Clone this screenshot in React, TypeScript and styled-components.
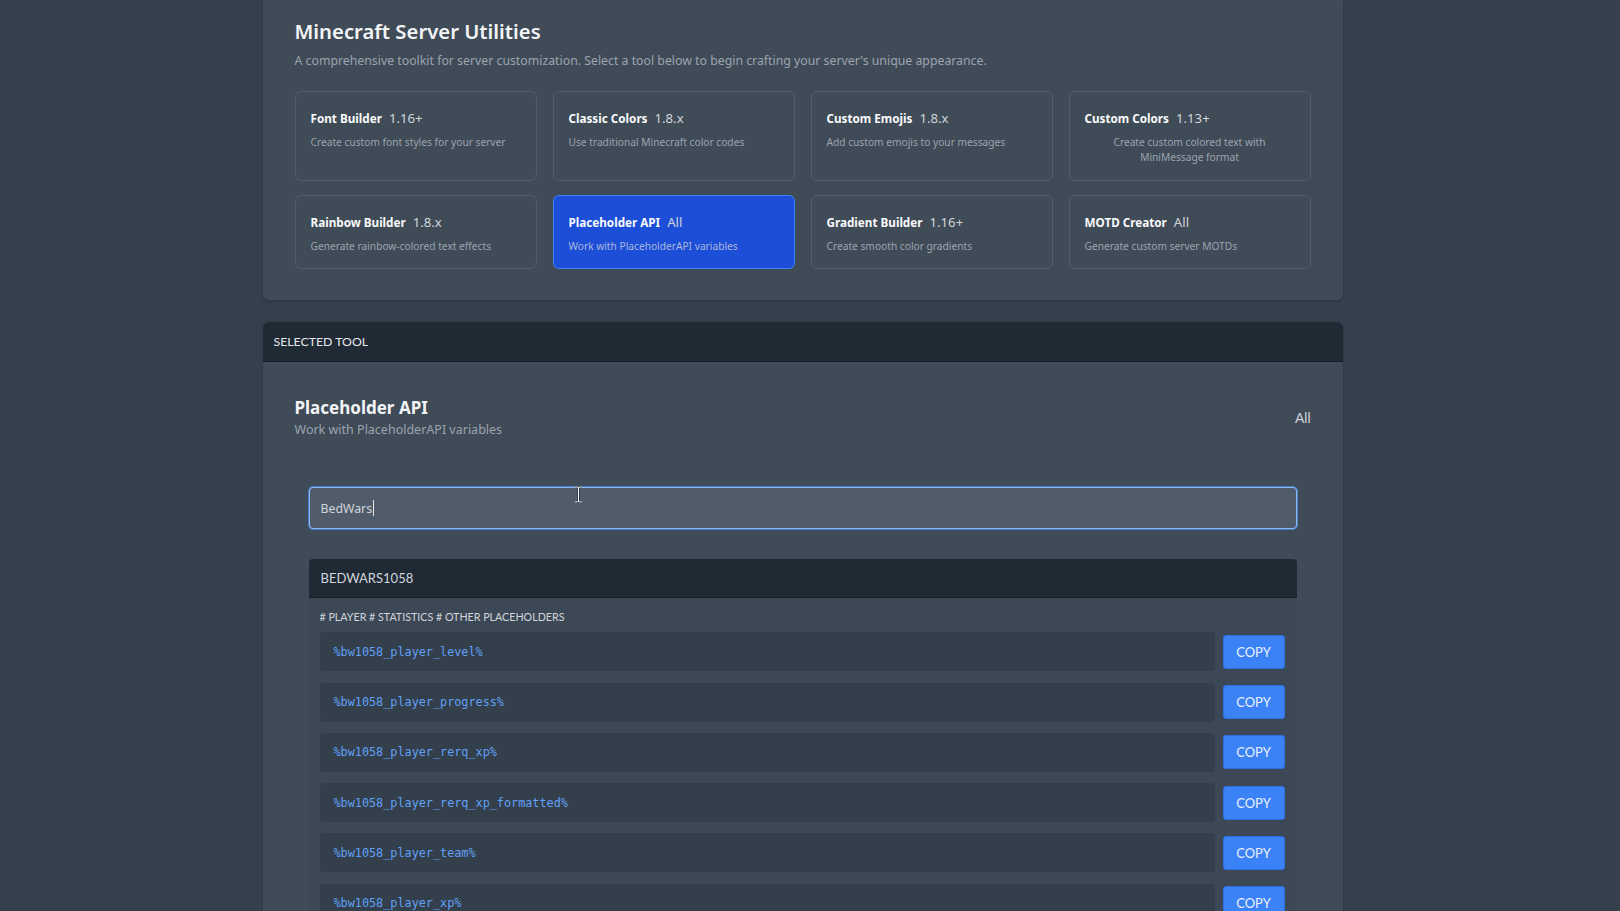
import React from "react";
import styled, { createGlobalStyle } from "styled-components";

const GlobalStyle = createGlobalStyle`
  html, body {
    margin: 0;
    padding: 0;
    background: #36404d;
    overflow: hidden;
    font-family: "Noto Sans", "Open Sans", sans-serif;
    color: #e5e7eb;
  }
  * { box-sizing: border-box; }
`;

const Page = styled.div`
  display: flex;
  justify-content: center;
  padding-right: 15px;
  min-height: 911px;
`;

const Column = styled.main`
  width: 1080px;
  display: flex;
  flex-direction: column;
  gap: 22px;
`;

const UtilitiesPanel = styled.section`
  background: #404b58;
  border-radius: 0 0 6px 6px;
  box-shadow: 0 1px 3px rgba(0, 0, 0, 0.25);
  padding: 17px 32px 31px;
`;

const PageTitle = styled.h1`
  margin: 0;
  font-size: 20.3px;
  line-height: 28px;
  font-weight: 600;
  color: #f3f4f6;
`;

const Lead = styled.p`
  margin: 6px 0 20px;
  font-size: 12.3px;
  line-height: 20px;
  color: #9ca3af;
`;

const ToolGrid = styled.div`
  display: grid;
  grid-template-columns: repeat(4, 1fr);
  gap: 14px 16px;
`;

const ToolCard = styled.button<{ $active?: boolean; $centered?: boolean }>`
  display: flex;
  flex-direction: column;
  align-items: stretch;
  padding: 16px 15px 14px;
  border-radius: 6px;
  border: 1px solid ${(p) => (p.$active ? "#3b82f6" : "#525d6a")};
  background: ${(p) => (p.$active ? "#1d4ed8" : "transparent")};
  text-align: ${(p) => (p.$centered ? "center" : "left")};
  font-family: inherit;
  cursor: pointer;
`;

const CardTitleRow = styled.div`
  display: flex;
  align-items: baseline;
  gap: 7px;
  height: 20px;
  line-height: 20px;
`;

const CardName = styled.span`
  font-size: 11.7px;
  font-weight: 700;
  color: #f9fafb;
`;

const CardVersion = styled.span`
  font-size: 13.2px;
  font-weight: 400;
  color: #d1d5db;
`;

const CardDesc = styled.p<{ $active?: boolean }>`
  margin: 7px 0 0;
  font-size: 10.2px;
  line-height: 15.4px;
  color: ${(p) => (p.$active ? "#a9b7dc" : "#9ca3af")};
`;

const SelectedPanel = styled.section`
  background: #404b58;
  border-radius: 6px 6px 0 0;
  box-shadow: 0 1px 3px rgba(0, 0, 0, 0.25);
  overflow: hidden;
  min-height: 620px;
`;

const PanelHeader = styled.header`
  height: 40px;
  display: flex;
  align-items: center;
  padding: 0 11px;
  background: #202a35;
  border-bottom: 1px solid #151c25;
  font-family: "Lato", sans-serif;
  font-size: 12.3px;
  color: #e5e7eb;
  text-transform: uppercase;
`;

const PanelBody = styled.div`
  padding: 34px 32px 0;
`;

const ToolHeader = styled.div`
  display: flex;
  justify-content: space-between;
  align-items: center;
`;

const ToolTitle = styled.h2`
  margin: 0;
  font-size: 17px;
  line-height: 24px;
  font-weight: 700;
  color: #f3f4f6;
`;

const ToolSubtitle = styled.p`
  margin: 0;
  font-size: 12.5px;
  line-height: 20px;
  color: #9ca3af;
`;

const Compat = styled.span`
  font-family: "Liberation Sans", Arial, sans-serif;
  font-size: 14px;
  color: #d1d5db;
`;

const Workspace = styled.div`
  padding: 47px 14px 0;
`;

const SearchField = styled.div`
  position: relative;
  height: 42px;
  display: flex;
  align-items: center;
  padding: 0 11px;
  background: #505c6a;
  border: 1px solid #8cb6f0;
  box-shadow: 0 0 0 1px #4a7cc8;
  border-radius: 4px;
  font-size: 12.3px;
  color: #d1d5db;
`;

const Caret = styled.span`
  display: inline-block;
  width: 1px;
  height: 16px;
  background: #e5e7eb;
  margin-left: 1px;
`;

const Pointer = styled.svg`
  position: absolute;
  left: 264px;
  top: -2px;
`;

const ResultsCard = styled.div`
  margin-top: 30px;
  border-radius: 4px 4px 0 0;
  overflow: hidden;
`;

const ResultsHeader = styled.div`
  height: 39px;
  display: flex;
  align-items: center;
  padding: 0 12px;
  background: #202a35;
  border-bottom: 1px solid #151c25;
  font-family: "Lato", sans-serif;
  font-size: 13px;
  color: #d1d5db;
`;

const ResultsBody = styled.div`
  background: #3d4856;
  padding: 10px 12px 12px 11px;
`;

const Category = styled.div`
  font-family: "Lato", sans-serif;
  font-size: 10.7px;
  line-height: 18px;
  color: #d1d5db;
  margin-bottom: 6px;
`;

const RowList = styled.div`
  display: flex;
  flex-direction: column;
  gap: 11.3px;
`;

const PlaceholderRow = styled.div`
  display: flex;
  align-items: center;
  gap: 8px;
`;

const CodeBox = styled.code`
  flex: 1;
  height: 39px;
  display: flex;
  align-items: center;
  padding: 0 14px;
  background: #343f4c;
  border-radius: 4px;
  font-family: "DejaVu Sans Mono", "Liberation Mono", monospace;
  font-size: 11.8px;
  color: #60a0f6;
`;

const CopyButton = styled.button`
  width: 62px;
  height: 34px;
  border: 1px solid #2f6fe4;
  border-radius: 3px;
  background: #3b82f6;
  color: #eaf1fe;
  font-family: "Lato", sans-serif;
  font-size: 13px;
  cursor: pointer;
`;

const tools = [
  { name: "Font Builder", version: "1.16+", desc: "Create custom font styles for your server" },
  { name: "Classic Colors", version: "1.8.x", desc: "Use traditional Minecraft color codes" },
  { name: "Custom Emojis", version: "1.8.x", desc: "Add custom emojis to your messages" },
  { name: "Custom Colors", version: "1.13+", desc: "Create custom colored text with MiniMessage format", centered: true },
  { name: "Rainbow Builder", version: "1.8.x", desc: "Generate rainbow-colored text effects" },
  { name: "Placeholder API", version: "All", desc: "Work with PlaceholderAPI variables", active: true },
  { name: "Gradient Builder", version: "1.16+", desc: "Create smooth color gradients" },
  { name: "MOTD Creator", version: "All", desc: "Generate custom server MOTDs" },
];

const placeholders = [
  "%bw1058_player_level%",
  "%bw1058_player_progress%",
  "%bw1058_player_rerq_xp%",
  "%bw1058_player_rerq_xp_formatted%",
  "%bw1058_player_team%",
  "%bw1058_player_xp%",
  "%bw1058_player_xp_formatted%",
];

export default function App() {
  return (
    <>
      <GlobalStyle />
      <Page>
        <Column>
          <UtilitiesPanel>
            <PageTitle>Minecraft Server Utilities</PageTitle>
            <Lead>
              A comprehensive toolkit for server customization. Select a tool below to begin crafting your
              server's unique appearance.
            </Lead>
            <ToolGrid>
              {tools.map((t) => (
                <ToolCard key={t.name} $active={t.active} $centered={t.centered}>
                  <CardTitleRow>
                    <CardName>{t.name}</CardName>
                    <CardVersion>{t.version}</CardVersion>
                  </CardTitleRow>
                  <CardDesc $active={t.active}>{t.desc}</CardDesc>
                </ToolCard>
              ))}
            </ToolGrid>
          </UtilitiesPanel>

          <SelectedPanel>
            <PanelHeader>Selected Tool</PanelHeader>
            <PanelBody>
              <ToolHeader>
                <div>
                  <ToolTitle>Placeholder API</ToolTitle>
                  <ToolSubtitle>Work with PlaceholderAPI variables</ToolSubtitle>
                </div>
                <Compat>All</Compat>
              </ToolHeader>
              <Workspace>
                <SearchField>
                  BedWars
                  <Caret />
                  <Pointer width="9" height="17" viewBox="0 0 9 17">
                    <path d="M1 1h2.5M5.5 1H8M4.5 1.5v14M1 16h2.5M5.5 16H8M3.5 1.5h2M3.5 15.5h2" stroke="#1f2937" strokeWidth="2.2" fill="none" />
                    <path d="M1 1h2.5M5.5 1H8M4.5 1.5v14M1 16h2.5M5.5 16H8M3.5 1.5h2M3.5 15.5h2" stroke="#f9fafb" strokeWidth="1" fill="none" />
                  </Pointer>
                </SearchField>
                <ResultsCard>
                  <ResultsHeader>BEDWARS1058</ResultsHeader>
                  <ResultsBody>
                    <Category># PLAYER # STATISTICS # OTHER PLACEHOLDERS</Category>
                    <RowList>
                      {placeholders.map((p) => (
                        <PlaceholderRow key={p}>
                          <CodeBox>{p}</CodeBox>
                          <CopyButton>COPY</CopyButton>
                        </PlaceholderRow>
                      ))}
                    </RowList>
                  </ResultsBody>
                </ResultsCard>
              </Workspace>
            </PanelBody>
          </SelectedPanel>
        </Column>
      </Page>
    </>
  );
}
